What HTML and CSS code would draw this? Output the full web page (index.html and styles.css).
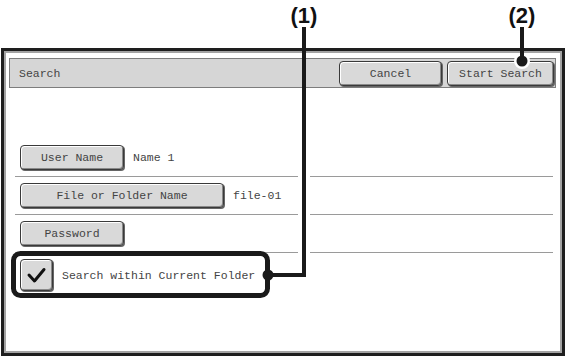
FILE: index.html
```html
<!DOCTYPE html>
<html lang="en">
<head>
    <meta charset="UTF-8">
    <title>Search</title>
    <link rel="stylesheet" href="styles.css">
</head>
<body>
    <div class="page">
        <div class="frame">
            <div class="titlebar">
                <span class="title">Search</span>
                <div class="actions">
                    <button class="key cancel">Cancel</button>
                    <button class="key start">Start Search</button>
                </div>
            </div>

            <div class="rows">
                <div class="row">
                    <button class="key short">User Name</button>
                    <span class="value">Name 1</span>
                </div>
                <div class="row">
                    <button class="key long">File or Folder Name</button>
                    <span class="value">file-01</span>
                </div>
                <div class="row">
                    <button class="key short">Password</button>
                </div>
                <div class="check-row">
                    <span class="checkbox">
                        <svg width="33" height="32" viewBox="0 0 33 32">
                            <path d="M9 16 L14.5 22 L24 10.5" fill="none" stroke="#111" stroke-width="3" stroke-linecap="round" stroke-linejoin="round"/>
                        </svg>
                    </span>
                    <span class="value">Search within Current Folder</span>
                </div>
            </div>
        </div>

        <!-- callouts drawn over the screen -->
        <span class="label label-1">(1)</span>
        <span class="label label-2">(2)</span>
        <svg class="callouts" width="566" height="358" viewBox="0 0 566 358">
            <path d="M304 92 V268" stroke="#fff" stroke-width="12" fill="none"/>
            <circle cx="522" cy="61" r="8" fill="#fff"/>
            <rect x="13.5" y="253.5" width="254" height="42" rx="7" fill="none" stroke="#1a1a1a" stroke-width="5"/>
            <path d="M268 275 H304 V27" stroke="#1a1a1a" stroke-width="4" fill="none"/>
            <circle cx="268" cy="275" r="5.5" fill="#1a1a1a"/>
            <path d="M522 27 V61" stroke="#1a1a1a" stroke-width="4" fill="none"/>
            <circle cx="522" cy="61" r="5.5" fill="#1a1a1a"/>
        </svg>
    </div>
</body>
</html>
```

FILE: styles.css
```css
body {
    margin: 0;
    background: #fff;
    font-family: "Liberation Mono", "DejaVu Sans Mono", monospace;
    font-size: 11.5px;
    color: #444;
}
.page {
    position: relative;
    width: 566px;
    height: 358px;
    overflow: hidden;
}
.frame {
    margin: 48px 0 0 1px;
    width: 564px;
    height: 308px;
    box-sizing: border-box;
    border: 3px solid #1e1e1e;
    padding: 2px;
    box-shadow: inset 0 0 0 2px #a3a3a3;
    background: #fff;
}
.titlebar {
    display: flex;
    align-items: center;
    justify-content: space-between;
    margin: 5px 0 0 3px;
    width: 547px;
    height: 30px;
    box-sizing: border-box;
    border: 1px solid #7d7d7d;
    background: #d6d6d6;
    padding: 0 1px 0 9px;
}
.actions {
    display: flex;
    gap: 5px;
}
.key {
    height: 25px;
    box-sizing: border-box;
    border: 1px solid #3a3a3a;
    border-radius: 4px;
    background: #d9d9d9;
    box-shadow: inset 1px 1px 0 #fff, inset -1px -1px 0 #8a8a8a, 1px 1px 0 #666;
    font-family: inherit;
    font-size: 11.5px;
    color: #444;
    padding: 0;
}
.cancel {
    width: 103px;
}
.start {
    width: 107px;
}
.short {
    width: 104px;
}
.long {
    width: 204px;
}
.rows {
    margin: 51px 7px 0 9px;
}
.row {
    display: flex;
    align-items: center;
    gap: 9px;
    height: 38px;
    box-sizing: border-box;
    padding: 6px 0 6px 5px;
    border-bottom: 1px solid #9a9a9a;
}
.check-row {
    display: flex;
    align-items: center;
    gap: 9px;
    padding: 6px 0 0 5px;
}
.checkbox {
    display: block;
    width: 33px;
    height: 32px;
    box-sizing: border-box;
    border: 1px solid #3a3a3a;
    border-radius: 4px;
    background: #d9d9d9;
    box-shadow: inset 1px 1px 0 #fff, inset -1px -1px 0 #8a8a8a, 1px 1px 0 #666;
}
.checkbox svg {
    display: block;
    margin: -1px;
}
.label {
    position: absolute;
    top: 3px;
    font-family: "Liberation Sans", Arial, sans-serif;
    font-weight: bold;
    font-size: 22px;
    color: #111;
    width: 40px;
    text-align: center;
}
.label-1 {
    left: 284px;
}
.label-2 {
    left: 502px;
}
.callouts {
    position: absolute;
    left: 0;
    top: 0;
    pointer-events: none;
}
```
